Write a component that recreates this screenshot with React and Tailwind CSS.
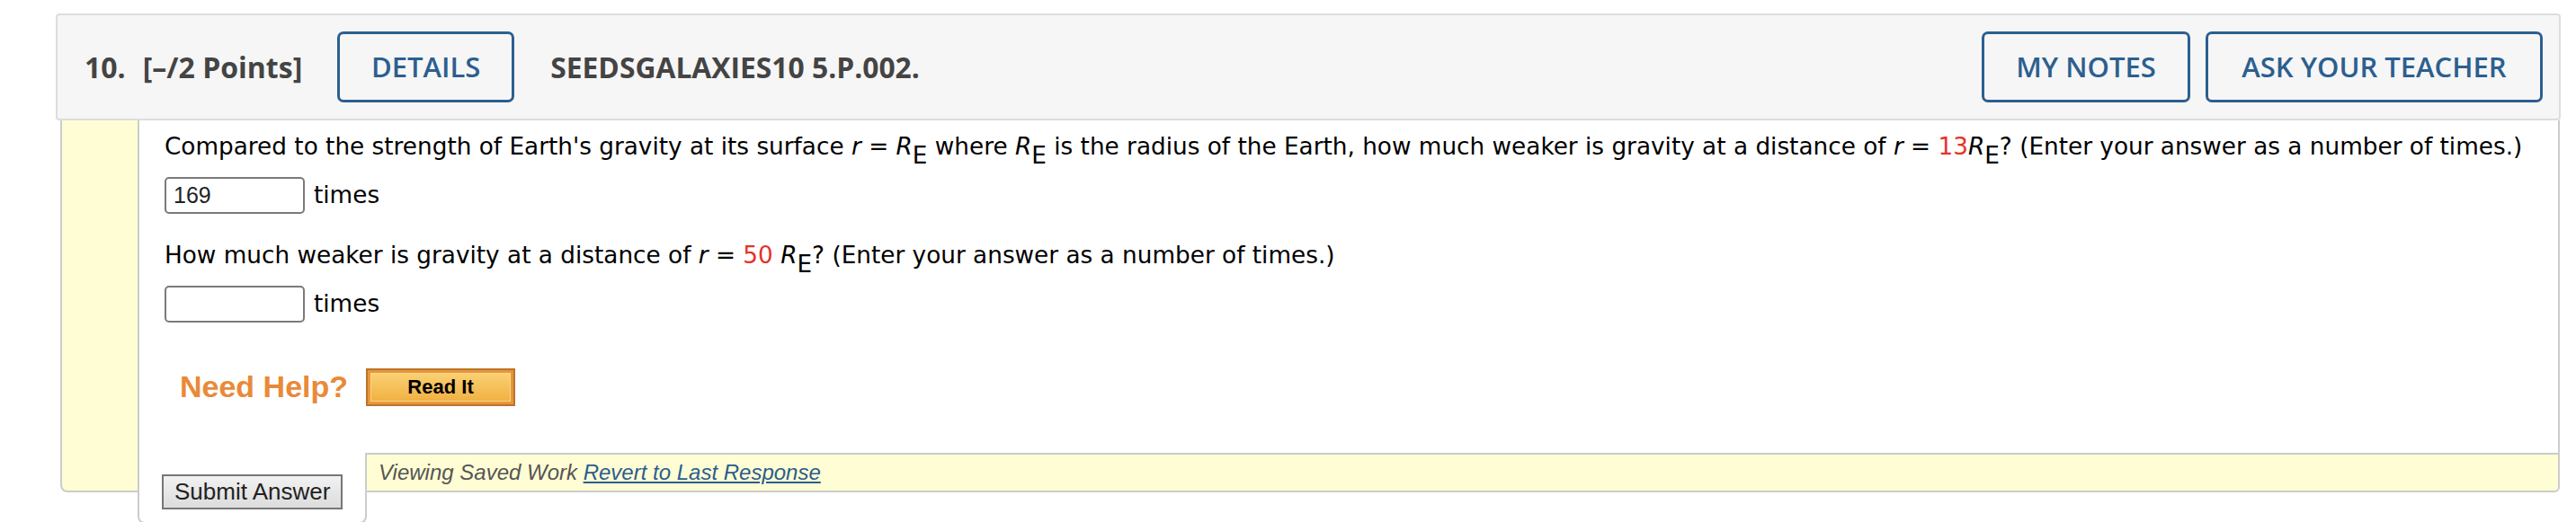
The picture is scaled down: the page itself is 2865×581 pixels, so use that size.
function Sub() {
  return <span className="relative top-[10px] not-italic">E</span>;
}

function R() {
  return (
    <>
      <i>R</i>
      <Sub />
    </>
  );
}

function AnswerRow({ value }) {
  return (
    <div className="flex items-center gap-[10px]">
      <div className="flex h-[41px] w-[156px] items-center rounded-[5px] border-2 border-[#7a7a7a] bg-white pl-[8px] font-['Liberation_Sans',Arial,sans-serif] text-[25px] text-[#222]">
        {value}
      </div>
      <span>times</span>
    </div>
  );
}

function HeaderButton({ children, width }) {
  return (
    <div
      className={`flex h-[79px] items-center justify-center rounded-[7px] border-[3px] border-[#2c5f8f] text-[31px] font-semibold text-[#2c5f8f] ${width}`}
    >
      {children}
    </div>
  );
}

export default function App() {
  return (
    <div className="min-h-[581px] bg-white pt-[15px] pl-[62px]">
      {/* header */}
      <div className="flex h-[119px] w-[2786px] items-center rounded-[4px] border-2 border-[#dddddd] bg-[#f6f6f6] pl-[30px] pr-[18px] font-['Open_Sans',sans-serif] text-[#444]">
        <span className="text-[32px] font-bold">10.</span>
        <span className="ml-[19px] text-[32px] font-bold">[–/2 Points]</span>
        <div className="ml-[39px]">
          <HeaderButton width="w-[197px]">DETAILS</HeaderButton>
        </div>
        <span className="ml-[40px] text-[31.8px] font-bold">SEEDSGALAXIES10 5.P.002.</span>
        <div className="ml-auto flex gap-[17px]">
          <HeaderButton width="w-[232px]">MY NOTES</HeaderButton>
          <HeaderButton width="w-[375px]">ASK YOUR TEACHER</HeaderButton>
        </div>
      </div>

      {/* body */}
      <div className="ml-[5px] flex w-[2780px] items-start font-['DejaVu_Sans',Verdana,sans-serif] text-[26.3px] text-black">
        <div className="h-[414px] w-[86px] shrink-0 rounded-bl-[8px] border-b-2 border-l-2 border-[#cccccc] bg-[#fffdd4]" />
        <div className="flex flex-1 flex-col">
          <div className="border-x-2 border-[#cccccc] bg-white pt-[14px] pb-[48px] pl-[28px]">
            <p className="whitespace-nowrap leading-[30px]">
              Compared to the strength of Earth's gravity at its surface <i>r</i> = <R /> where <R /> is the radius of the
              Earth, how much weaker is gravity at a distance of <i>r</i> = <span className="text-[#e5332a]">13</span>
              <R />? (Enter your answer as a number of times.)
            </p>
            <div className="mt-[19px]">
              <AnswerRow value="169" />
            </div>
            <p className="mt-[31px] whitespace-nowrap leading-[30px]">
              How much weaker is gravity at a distance of <i>r</i> = <span className="text-[#e5332a]">50</span> <R />?
              (Enter your answer as a number of times.)
            </p>
            <div className="mt-[19px]">
              <AnswerRow value="" />
            </div>
            <div className="mt-[46px] ml-[17px] flex items-center gap-[20px]">
              <span className="font-['Liberation_Sans',Arial,sans-serif] text-[34px] font-bold text-[#e98a38]">
                Need Help?
              </span>
              <div className="h-[42px] w-[166px] border-2 border-[#bb7428] bg-[#e8963c] p-[3px]">
                <div className="flex h-full items-center justify-center border border-[#fbd68a] bg-gradient-to-b from-[#f9d071] to-[#f1b142] font-['Liberation_Sans',Arial,sans-serif] text-[22px] font-bold text-black">
                  Read It
                </div>
              </div>
            </div>
          </div>

          <div className="flex items-start">
            <div className="h-[79px] w-[255px] shrink-0 rounded-b-[8px] border-x-2 border-b-2 border-[#cccccc] bg-white pt-[24px] pl-[25px]">
              <div className="flex h-[39px] w-[201px] items-center border-2 border-[#767676] bg-gradient-to-b from-[#f2f2f2] to-[#dcdcdc] pl-[12px] font-['Liberation_Sans',Arial,sans-serif] text-[26px] text-[#222]">
                Submit Answer
              </div>
            </div>
            <div className="flex h-[44px] flex-1 items-center rounded-br-[6px] border-t-2 border-r-2 border-b-2 border-[#cccccc] bg-[#fffdd4] pl-[13px] font-['Liberation_Sans',Arial,sans-serif] text-[24px] italic text-[#555]">
              Viewing Saved Work&nbsp;
              <span className="text-[#2a5d8f] underline">Revert to Last Response</span>
            </div>
          </div>
        </div>
      </div>
    </div>
  );
}
